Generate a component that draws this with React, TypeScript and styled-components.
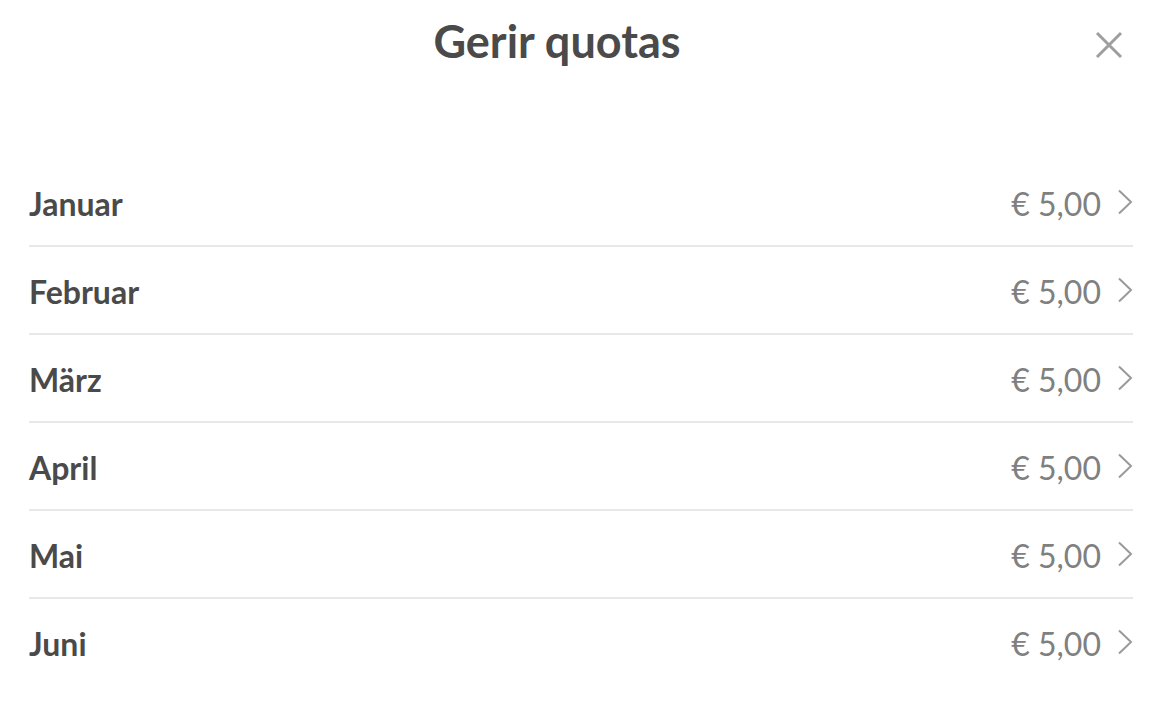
import React from "react";
import styled, { createGlobalStyle } from "styled-components";

const GlobalStyle = createGlobalStyle`
  html, body { margin: 0; padding: 0; background: #ffffff; }
  body { font-family: "Lato", "Noto Sans", sans-serif; -webkit-font-smoothing: antialiased; }
`;

const Page = styled.div`
  display: flex;
  flex-direction: column;
  padding: 15px 25px 0 29px;
  background: #ffffff;
`;

const Header = styled.header`
  display: flex;
  align-items: flex-start;
  margin-bottom: 91px;
`;

const Title = styled.h1`
  flex: 1;
  margin: 0;
  text-align: center;
  font-size: 45px;
  line-height: 53px;
  font-weight: 700;
  color: #4a4a4a;
`;

const CloseButton = styled.button`
  width: 48px;
  height: 28px;
  margin-top: 16px;
  padding: 0;
  border: 0;
  background: transparent;
  display: flex;
  align-items: center;
  justify-content: center;
  cursor: pointer;
`;

const List = styled.ul`
  list-style: none;
  margin: 0;
  padding: 0;
`;

const Item = styled.li<{ $last?: boolean }>`
  display: flex;
  align-items: center;
  padding: 26px 0 ${(p) => (p.$last ? "24px" : "22px")};
  border-bottom: 2px solid ${(p) => (p.$last ? "transparent" : "#e8e8e8")};
`;

const Month = styled.span`
  flex: 1;
  font-size: 32px;
  line-height: 38px;
  font-weight: 700;
  color: #4a4a4a;
`;

const Amount = styled.span`
  font-size: 32px;
  line-height: 38px;
  font-weight: 400;
  color: #808080;
`;

const Chevron = styled.svg`
  margin-left: 16px;
  flex: none;
  margin-top: -5px;
`;

const months = ["Januar", "Februar", "März", "April", "Mai", "Juni"];

export default function App() {
  return (
    <Page>
      <GlobalStyle />
      <Header>
        <Title>Gerir quotas</Title>
        <CloseButton aria-label="Schließen">
          <svg width="28" height="28" viewBox="0 0 28 28">
            <path d="M2 2 L26 26 M26 2 L2 26" stroke="#9e9e9e" strokeWidth="3" strokeLinecap="butt" fill="none" />
          </svg>
        </CloseButton>
      </Header>
      <List>
        {months.map((m, i) => (
          <Item key={m} $last={i === months.length - 1}>
            <Month>{m}</Month>
            <Amount>€ 5,00</Amount>
            <Chevron width="16" height="26" viewBox="0 0 16 26">
              <path d="M2 1.5 L14 13 L2 24.5" stroke="#9a9a9a" strokeWidth="2" fill="none" />
            </Chevron>
          </Item>
        ))}
      </List>
    </Page>
  );
}
